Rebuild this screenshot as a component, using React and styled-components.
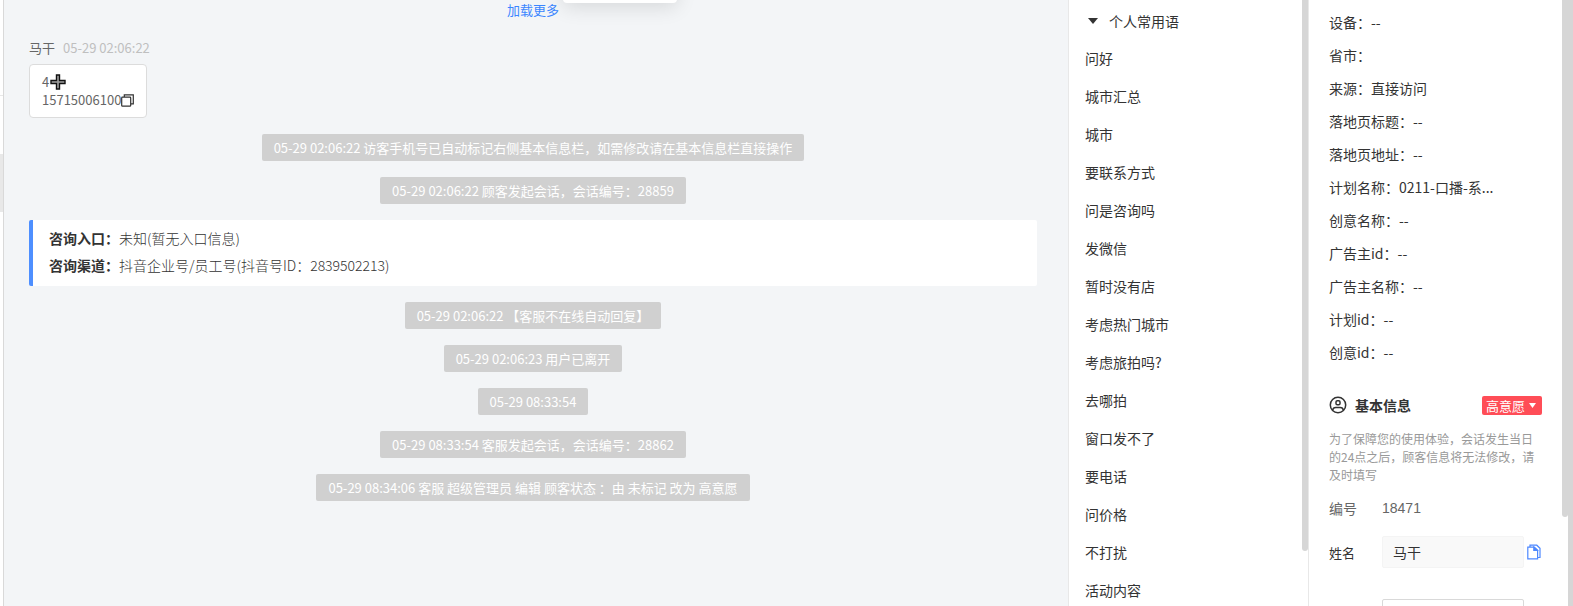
import React, { useState } from 'react'
import styled, { createGlobalStyle } from 'styled-components'

const phrases = ['问好', '城市汇总', '城市', '要联系方式', '问是咨询吗', '发微信', '暂时没有店', '考虑热门城市', '考虑旅拍吗?', '去哪拍', '窗口发不了', '要电话', '问价格', '不打扰', '活动内容'];

const visitInfo = [
    ['设备', '--'],
    ['省市', ''],
    ['来源', '直接访问'],
    ['落地页标题', '--'],
    ['落地页地址', '--'],
    ['计划名称', '0211-口播-系...'],
    ['创意名称', '--'],
    ['广告主id', '--'],
    ['广告主名称', '--'],
    ['计划id', '--'],
    ['创意id', '--'],
];

const noticesBefore = [
    '05-29 02:06:22 访客手机号已自动标记右侧基本信息栏，如需修改请在基本信息栏直接操作',
    '05-29 02:06:22 顾客发起会话，会话编号：28859',
];

const noticesAfter = [
    '05-29 02:06:22 【客服不在线自动回复】',
    '05-29 02:06:23 用户已离开',
    '05-29 08:33:54',
    '05-29 08:33:54 客服发起会话，会话编号：28862',
    '05-29 08:34:06 客服 超级管理员 编辑 顾客状态 ：由 未标记 改为 高意愿',
];

const PlusIcon = () => (
    <svg width="18" height="18" viewBox="0 0 18 18">
        <path d="M7.500 2h3v5.500H16v3h-5.500V16h-3v-5.500H2v-3h5.500z" fill="#a0a0a0" stroke="#111" strokeWidth="1.400" />
    </svg>
)

const CopyIcon = () => (
    <svg width="13" height="13" viewBox="0 0 13 13" fill="none" stroke="#333" strokeWidth="1.2">
        <rect x="0.7" y="3.2" width="9" height="9" rx="0.8" />
        <path d="M3.3 3V0.9h9v9H9.9" />
    </svg>
)

const UserIcon = () => (
    <svg width="18" height="18" viewBox="0 0 18 18" fill="none" stroke="#333" strokeWidth="1.5">
        <circle cx="9" cy="9" r="7.7" />
        <rect x="7" y="4.800" width="4" height="4" rx="1.300" />
        <path d="M3.600 14.300c.3-1.900 1.600-2.800 3.200-2.800h4.400c1.600 0 2.900.9 3.200 2.800" />
    </svg>
)

const PagesIcon = () => (
    <svg width="14" height="16" viewBox="0 0 14 16" fill="none" stroke="#4d88ff" strokeWidth="1.2">
        <path d="M3 3V1.200h6.800L13 4.200v9.300h-2" />
        <path d="M.8 3.100h6.400L10.600 6.300v8.500H.8z" fill="#fff" />
        <path d="M6.800 3.200v3.300h3.600z" fill="#4d88ff" />
    </svg>
)

const Caret = ({ width, height, color }) => (
    <svg width={width} height={height} viewBox="0 0 10 6" preserveAspectRatio="none">
        <path d="M0 0h10L5 6z" fill={color} />
    </svg>
)

function App() {

    const [name, setName] = useState('马干');
    const [phone, setPhone] = useState('');
    const [open, setOpen] = useState(true);

    return (
        <Container>
            <GlobalStyle />
            <SessionEdge>
                <div className="blank"></div>
                <div className="row"></div>
                <div className="row active"></div>
            </SessionEdge>
            <Chat>
                <FloatingTip />
                <LoadMore type="button">加载更多</LoadMore>
                <Message>
                    <div className="meta">
                        <span className="name">马干</span>
                        <time>05-29 02:06:22</time>
                    </div>
                    <div className="bubble">
                        <div className="line">4<PlusIcon /></div>
                        <div className="line">
                            15715006100
                            <IconButton type="button" aria-label="复制"><CopyIcon /></IconButton>
                        </div>
                    </div>
                </Message>
                <NoticeList>
                    {noticesBefore.map((text) => <Notice key={text}>{text}</Notice>)}
                    <SourceCard>
                        <p><strong>咨询入口：</strong>未知(暂无入口信息)</p>
                        <p><strong>咨询渠道：</strong>抖音企业号/员工号(抖音号ID：2839502213)</p>
                    </SourceCard>
                    {noticesAfter.map((text) => <Notice key={text}>{text}</Notice>)}
                </NoticeList>
            </Chat>
            <PhrasePanel>
                <GroupTitle type="button" aria-expanded={open} onClick={() => setOpen(!open)}>
                    <Caret width="10" height="6" color="#333" />
                    个人常用语
                </GroupTitle>
                {
                    open && phrases.map((phrase) => <Phrase type="button" key={phrase}>{phrase}</Phrase>)
                }
                <ScrollThumb $length="91%" />
            </PhrasePanel>
            <InfoPanel>
                <dl>
                    {visitInfo.map(([label, value]) => (
                        <VisitRow key={label}>
                            <dt>{label}：</dt>
                            <dd>{value}</dd>
                        </VisitRow>
                    ))}
                </dl>
                <SectionHeader>
                    <UserIcon />
                    <h2>基本信息</h2>
                    <Tag type="button" aria-haspopup="listbox">
                        高意愿
                        <Caret width="7" height="5" color="#fff" />
                    </Tag>
                </SectionHeader>
                <Hint>为了保障您的使用体验，会话发生当日的24点之后，顾客信息将无法修改，请及时填写</Hint>
                <NumberRow>
                    <span>编号</span>
                    <span className="value">18471</span>
                </NumberRow>
                <Field>
                    <label htmlFor="name">姓名</label>
                    <TextInput id="name" $filled value={name} onChange={(e) => setName(e.target.value)} />
                    <IconButton type="button" aria-label="复制姓名"><PagesIcon /></IconButton>
                </Field>
                <Field>
                    <label htmlFor="phone"></label>
                    <TextInput id="phone" aria-label="电话" value={phone} onChange={(e) => setPhone(e.target.value)} />
                </Field>
                <ScrollThumb $length="517px" />
            </InfoPanel>
            <PageScrollbar />
        </Container>
    )
}

const GlobalStyle = createGlobalStyle`
    *{
        box-sizing: border-box;
    }
    body{
        margin: 0;
        color: #333;
        font-family: "Noto Sans CJK SC", "Noto Sans", sans-serif;
        font-size: 14px;
    }
    button, input{
        font: inherit;
        color: inherit;
    }
    button{
        padding: 0;
        border: none;
        background: none;
        cursor: pointer;
    }
    p, dl, dd, h2{
        margin: 0;
    }
    svg{
        display: block;
        flex: none;
    }
`;

const Container = styled.div`
    display: flex;
    height: 100vh;
    overflow: hidden;
    background-color: #fff;
`;

const SessionEdge = styled.div`
    flex: none;
    width: 4px;
    border-right: 1px solid #d9d9d9;
    .blank{
        height: 96px;
        border-bottom: 1px solid #e8e8e8;
    }
    .row{
        height: 58px;
        &.active{
            background-color: #e8e8e8;
        }
    }
`;

const Chat = styled.main`
    position: relative;
    flex: 1;
    min-width: 0;
    display: flex;
    flex-direction: column;
    padding: 0 31px 0 25px;
    background-color: #f3f5f7;
    font-size: 13px;
`;

const FloatingTip = styled.div`
    position: absolute;
    top: -37px;
    left: 50%;
    width: 114px;
    height: 40px;
    margin-left: 27px;
    border-radius: 4px;
    background-color: #fff;
    box-shadow: 0 4px 20px rgba(0, 0, 0, 0.12);
`;

const LoadMore = styled.button`
    align-self: center;
    line-height: 20px;
    margin-bottom: 18px;
    color: #3b86ff;
`;

const IconButton = styled.button`
    display: flex;
    align-items: center;
`;

const Message = styled.div`
    margin-bottom: 16px;
    .meta{
        display: flex;
        gap: 8px;
        line-height: 20px;
        margin-bottom: 6px;
        .name{
            color: #666;
        }
        time{
            color: #bfbfbf;
        }
    }
    .bubble{
        width: fit-content;
        padding: 8px 12px;
        border: 1px solid #dcdcdc;
        border-radius: 4px;
        background-color: #fff;
        color: #666;
    }
    .line{
        display: flex;
        align-items: center;
        line-height: 18px;
    }
`;

const NoticeList = styled.div`
    display: flex;
    flex-direction: column;
    align-items: center;
    gap: 16px;
`;

const Notice = styled.div`
    padding: 0 12px;
    line-height: 27px;
    border-radius: 2px;
    background-color: #d0d0d0;
    color: #fff;
    white-space: pre;
`;

const SourceCard = styled.section`
    align-self: stretch;
    padding: 5px 16px 7px;
    border-left: 4px solid #4e8fff;
    border-radius: 2px;
    background-color: #fff;
    font-size: 14px;
    font-weight: 300;
    line-height: 27px;
    strong{
        font-weight: 700;
    }
`;

const PhrasePanel = styled.aside`
    position: relative;
    flex: none;
    width: 241px;
    display: flex;
    flex-direction: column;
    padding: 3px 16px 0;
    border-left: 1px solid #e8e8e8;
    border-right: 1px solid #e8e8e8;
`;

const GroupTitle = styled.button`
    display: flex;
    align-items: center;
    gap: 11px;
    padding: 0 3px;
    line-height: 36px;
`;

const Phrase = styled.button`
    flex: none;
    line-height: 38px;
    text-align: left;
`;

const ScrollThumb = styled.div`
    position: absolute;
    top: 0;
    right: 0;
    width: 6px;
    height: ${(props) => props.$length};
    border-radius: 0 0 3px 3px;
    background-color: #d6d6d6;
`;

const InfoPanel = styled.aside`
    position: relative;
    flex: none;
    width: 259px;
    padding: 6px 26px 0 20px;
`;

const VisitRow = styled.div`
    display: flex;
    line-height: 33px;
`;

const SectionHeader = styled.div`
    display: flex;
    align-items: center;
    margin-top: 26px;
    h2{
        margin-left: 8px;
        font-size: 14px;
        line-height: 20px;
    }
`;

const Tag = styled.button`
    display: flex;
    align-items: center;
    gap: 4px;
    height: 19px;
    margin-left: auto;
    padding: 0 6px 0 4px;
    border-radius: 2px;
    background-color: #ff4d57;
    color: #fff;
    font-size: 13px;
`;

const Hint = styled.p`
    margin: 15px 0 14px;
    padding-right: 4px;
    color: #999;
    font-size: 12px;
    line-height: 18px;
`;

const NumberRow = styled.div`
    display: grid;
    grid-template-columns: 53px 1fr;
    line-height: 20px;
    margin-bottom: 18px;
    color: #666;
    .value{
        font-family: "Liberation Sans", Arial, sans-serif;
    }
`;

const Field = styled.div`
    display: grid;
    grid-template-columns: 53px 142px auto;
    align-items: center;
    margin-bottom: 31px;
    label{
        font-size: 13px;
    }
    button{
        margin-left: 3px;
    }
`;

const TextInput = styled.input`
    min-width: 0;
    height: 32px;
    padding: 0 10px;
    border: 1px solid ${(props) => props.$filled ? '#f4f4f4' : '#d9d9d9'};
    border-radius: 2px;
    background-color: ${(props) => props.$filled ? '#f9f9f9' : '#fff'};
    outline: none;
`;

const PageScrollbar = styled.div`
    flex: none;
    width: 5px;
    background-color: #d6d6d6;
`;

export default App
